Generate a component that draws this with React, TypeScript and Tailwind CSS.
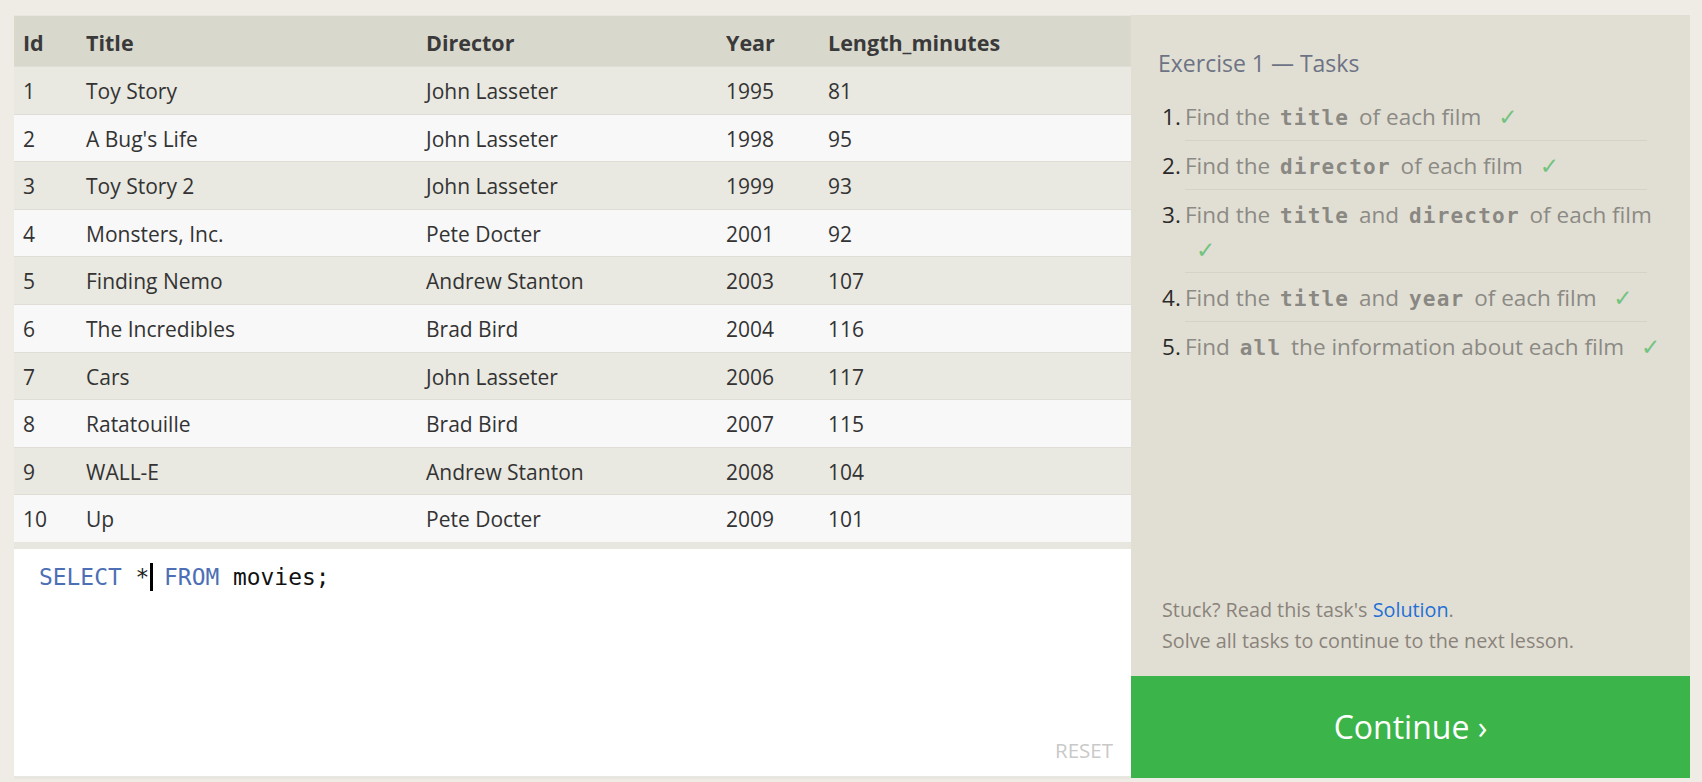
import React from 'react';

const movies = [
  { id: 1, title: 'Toy Story', director: 'John Lasseter', year: 1995, length: 81 },
  { id: 2, title: "A Bug's Life", director: 'John Lasseter', year: 1998, length: 95 },
  { id: 3, title: 'Toy Story 2', director: 'John Lasseter', year: 1999, length: 93 },
  { id: 4, title: 'Monsters, Inc.', director: 'Pete Docter', year: 2001, length: 92 },
  { id: 5, title: 'Finding Nemo', director: 'Andrew Stanton', year: 2003, length: 107 },
  { id: 6, title: 'The Incredibles', director: 'Brad Bird', year: 2004, length: 116 },
  { id: 7, title: 'Cars', director: 'John Lasseter', year: 2006, length: 117 },
  { id: 8, title: 'Ratatouille', director: 'Brad Bird', year: 2007, length: 115 },
  { id: 9, title: 'WALL-E', director: 'Andrew Stanton', year: 2008, length: 104 },
  { id: 10, title: 'Up', director: 'Pete Docter', year: 2009, length: 101 },
];

const cols = 'grid grid-cols-[63px_340px_300px_102px_1fr]';

function Code({ children }: { children: React.ReactNode }) {
  return (
    <code className="px-[4px] font-['DejaVu_Sans_Mono',monospace] text-[21px] font-bold tracking-[1.2px] text-[#8a8883]">
      {children}
    </code>
  );
}

function Check() {
  return <span className="ml-[11px] font-['DejaVu_Sans',sans-serif] text-[23px] text-[#72c37f]">✓</span>;
}

const tasks: React.ReactNode[] = [
  <>Find the <Code>title</Code> of each film <Check /></>,
  <>Find the <Code>director</Code> of each film <Check /></>,
  <>Find the <Code>title</Code> and <Code>director</Code> of each film<br /><Check /></>,
  <>Find the <Code>title</Code> and <Code>year</Code> of each film <Check /></>,
  <>Find <Code>all</Code> the information about each film <Check /></>,
];

function MoviesTable() {
  return (
    <div className="text-[21px] text-[#333]">
      <div className={`${cols} h-[50px] items-center bg-[#d9d8cd] pt-[4px] text-[21.5px] font-bold text-[#3a3a3a]`}>
        <div className="px-[9px]">Id</div>
        <div className="px-[9px]">Title</div>
        <div className="px-[9px]">Director</div>
        <div className="px-[9px]">Year</div>
        <div className="px-[9px]">Length_minutes</div>
      </div>
      {movies.map((m, i) => (
        <div
          key={m.id}
          className={`${cols} h-[47.6px] items-center border-t border-[#dfddd6] pt-[3px] ${i % 2 === 0 ? 'bg-[#e9e8e1]' : 'bg-[#f8f8f8]'}`}
        >
          <div className="px-[9px]">{m.id}</div>
          <div className="px-[9px]">{m.title}</div>
          <div className="px-[9px]">{m.director}</div>
          <div className="px-[9px]">{m.year}</div>
          <div className="px-[9px]">{m.length}</div>
        </div>
      ))}
    </div>
  );
}

function Editor() {
  return (
    <div className="mt-[7px] flex flex-1 flex-col bg-white pl-[25px] pr-[18px] pt-[13px] pb-[14px]">
      <div className="font-['DejaVu_Sans_Mono',monospace] text-[22.9px] leading-[30px] whitespace-pre">
        <span className="text-[#4d6fb5]">SELECT</span>
        <span className="text-[#222]"> *</span>
        <span className="-mr-[3px] ml-[1px] inline-block h-[28px] w-[3px] bg-black align-[-6px]" />
        <span> </span>
        <span className="text-[#4d6fb5]">FROM</span>
        <span className="text-[#111]"> movies;</span>
      </div>
      <div className="flex-1" />
      <div className="text-right text-[20.5px] leading-[24px] text-[#c9c9c9]">RESET</div>
    </div>
  );
}

function TaskPanel() {
  return (
    <div className="mb-[1px] flex flex-1 flex-col bg-[#e1dfd4]">
      <div className="pl-[27px] pt-[33px]">
        <h2 className="text-[23px] leading-[30px] text-[#6d7384]">Exercise 1 — Tasks</h2>
        <ol className="mt-[14px]">
          {tasks.map((t, i) => (
            <li key={i} className="flex text-[22.5px]">
              <span className="w-[27px] shrink-0 pl-[4px] pt-[8px] leading-[34px] text-[#2a2a2a]">{i + 1}.</span>
              <div className="flex-1 pr-[8px]">
                <div className="pt-[8px] pb-[5px] leading-[34px] text-[#8c8a84]">{t}</div>
                {i < tasks.length - 1 && <div className="mr-[35px] h-px bg-[#d5d3c8]" />}
              </div>
            </li>
          ))}
        </ol>
      </div>
      <div className="flex-1" />
      <div className="pl-[31px] pb-[20px] text-[19.8px] leading-[31px] text-[#8a837b]">
        <p>
          Stuck? Read this task's <span className="text-[#1f6fd6]">Solution</span>.
        </p>
        <p>Solve all tasks to continue to the next lesson.</p>
      </div>
      <button className="flex h-[102px] items-center justify-center bg-[#3bb54a] text-[32px] text-white">
        Continue ›
      </button>
    </div>
  );
}

export default function App() {
  return (
    <div className="h-[782px] bg-[#efece5] pt-[15px] pl-[14px] pr-[12px] font-['Open_Sans',sans-serif]">
      <div className="flex h-[764px]">
        <div className="flex w-[1117px] flex-col bg-[#e8e7df] pt-[1px] pb-[3px]">
          <MoviesTable />
          <Editor />
        </div>
        <TaskPanel />
      </div>
    </div>
  );
}
